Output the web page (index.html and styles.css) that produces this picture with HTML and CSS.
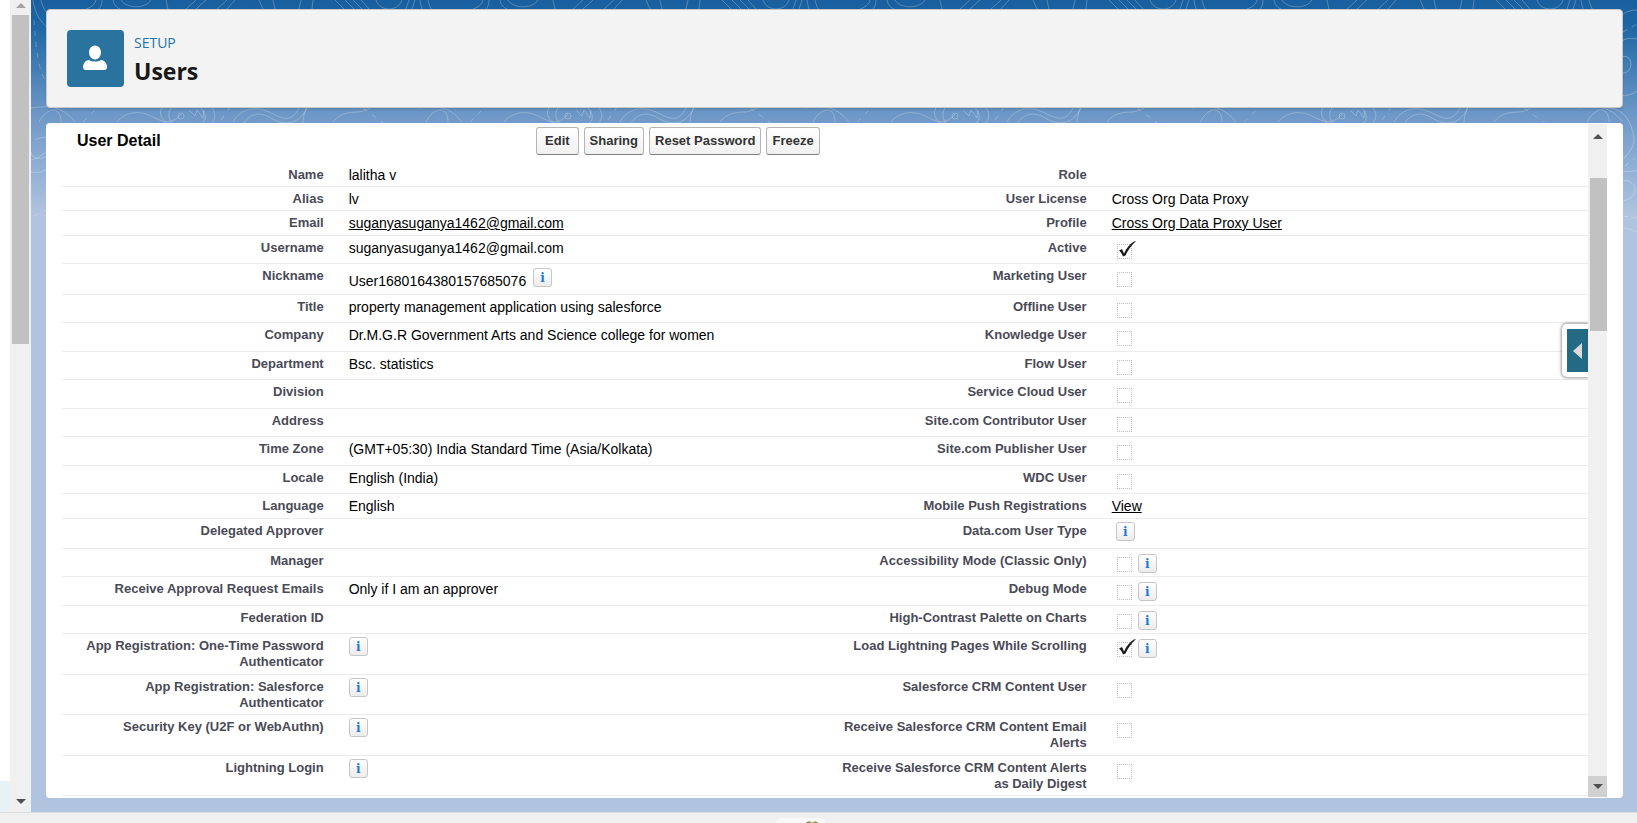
FILE: index.html
```html
<!DOCTYPE html>
<html lang="en">
<head>
<meta charset="utf-8">
<title>Users | Setup</title>
<link rel="stylesheet" href="styles.css">
</head>
<body>
<svg class="defs" aria-hidden="true">
  <symbol id="check" viewBox="0 0 20 20"><path d="M2 10.5 5 9l2 4.500C9.500 8 13 3.500 17 1.500l2-.5C14.500 5 11 10 8.500 15.500L6 16.500C5 14 4 12 2 10.500z" fill="#1c1c1c"/></symbol>
</svg>
<div class="app">
  <aside class="nav"><div class="nav-foot"></div></aside>
  <div class="scrollbar page-scroll" aria-hidden="true">
    <span class="arrow up faint"></span>
    <span class="thumb"></span>
    <span class="arrow down"></span>
  </div>
  <main class="stage">
    <svg class="topo" aria-hidden="true">
      <defs>
        <pattern id="contours" width="387" height="250" patternUnits="userSpaceOnUse" x="0" y="0">
          <g fill="none" stroke="#fff" stroke-opacity=".24" stroke-width="1">
            <path d="M2 0c2 14 8 24 20 32M10 0c2 10 8 18 18 22M55 9c6-2 9-5 10-9M68 9c2-2 3-5 3-9M82 0c1 5 4 8 7 9M90 0c4 8 24 10 30 0M135 0l2 9M155 9l10-9M165 9l10-9M186 9l10-9M196 9l8-9M228 0l4 9M242 0l2 9M270 0l-2 9M282 0l-1 9M304 0l9 9M314 0l9 9M322 0l9 9M330 0l8 9M345 0c4 12 22 12 26 0M378 0l-3 9M384 0l-3 9"/>
            <path d="M0 108c14-2 30-4 44 14M8 122c4-8 10-12 14-12 6 0 8 6 8 12M86 122c8-10 22-12 34-6s20 10 30-2M132 106c-6 8 0 14 4 18M140 108c-4 6-2 12 2 16M168 106c8 8 8 14 2 18M180 106c6 8 4 14 0 18M202 122c8-14 22-16 36-10 12 6 22 12 30-4M212 124c8-12 18-12 28-6s26 10 36-10M276 106c-2 6-4 10-4 18M302 122c6-8 14-10 26-10 8-2 12-4 16-8"/>
            <circle cx="150" cy="116" r="3"/><path d="M158 110l6 6 2-6 6 8 1-8"/>
            <path d="M4 140c10-6 20 0 16 10-4 12-20 10-20 2M0 160c8-2 14-6 20-14M0 172c10 2 16-2 22-8"/>
            <path stroke-dasharray="5 6" d="M3 20c2 30 4 60 20 70M52 122l14-14M190 120l10-14M332 108l22 16M3 216l16-8"/>
          </g>
        </pattern>
      </defs>
      <rect width="1592" height="245" fill="url(#contours)"/>
      <g class="edge" fill="none" stroke="#fff" stroke-opacity=".28" stroke-width="1">
        <path d="M1590 16c4-4 10-6 16-6M1590 42c4-4 8-4 16-3M1590 57c5-2 10 1 10 7s-5 10-10 9M1590 96c6 0 12-2 16-5M1576 108c16 0 24 12 27 30 1 8-6 16-13 24M1590 172c6-2 10 1 16-2M1590 181c7-2 13 2 14 8s-6 12-14 12M1590 228c6 0 12 2 16 4"/>
        <path stroke-dasharray="5 5" d="M1592 32l14-8M1594 166l10-8M1592 216l14 2"/>
      </g>
    </svg>
    <header class="page-header">
      <span class="avatar"><svg viewBox="0 0 57 57" aria-hidden="true"><ellipse cx="28" cy="22.500" rx="6" ry="7"/><path d="M22 30c3 2 9 2 12 0 4 0 6 4 6 7 0 2-1 3-3 3H19c-2 0-3-1-3-3 0-3 2-7 6-7z"/></svg></span>
      <div>
        <p class="eyebrow">SETUP</p>
        <h1>Users</h1>
      </div>
    </header>
    <section class="panel">
      <div class="detail">
        <div class="toolbar">
          <h2>User Detail</h2>
          <div class="actions">
            <button type="button" class="wide">Edit</button>
            <button type="button">Sharing</button>
            <button type="button">Reset Password</button>
            <button type="button">Freeze</button>
          </div>
        </div>
        <table>
          <colgroup><col class="c-label"><col class="c-value"><col class="c-label"><col class="c-value"></colgroup>
          <tbody>
          <tr class="s"><th>Name</th><td>lalitha v</td><th>Role</th><td></td></tr>
          <tr class="s"><th>Alias</th><td>lv</td><th>User License</th><td>Cross Org Data Proxy</td></tr>
          <tr class="m"><th>Email</th><td><a href="#">suganyasuganya1462@gmail.com</a></td><th>Profile</th><td><a href="#">Cross Org Data Proxy User</a></td></tr>
          <tr><th>Username</th><td>suganyasuganya1462@gmail.com</td><th>Active</th><td><span class="box"><svg><use href="#check"/></svg></span></td></tr>
          <tr class="xl"><th>Nickname</th><td class="with-info">User1680164380157685076 <button type="button" class="info" aria-label="Nickname info">i</button></td><th>Marketing User</th><td><span class="box"></span></td></tr>
          <tr><th>Title</th><td>property management application using salesforce</td><th>Offline User</th><td><span class="box"></span></td></tr>
          <tr class="l"><th>Company</th><td>Dr.M.G.R Government Arts and Science college for women</td><th>Knowledge User</th><td><span class="box"></span></td></tr>
          <tr><th>Department</th><td>Bsc. statistics</td><th>Flow User</th><td><span class="box"></span></td></tr>
          <tr class="l"><th>Division</th><td></td><th>Service Cloud User</th><td><span class="box"></span></td></tr>
          <tr><th>Address</th><td></td><th>Site.com Contributor User</th><td><span class="box"></span></td></tr>
          <tr class="l"><th>Time Zone</th><td>(GMT+05:30) India Standard Time (Asia/Kolkata)</td><th>Site.com Publisher User</th><td><span class="box"></span></td></tr>
          <tr><th>Locale</th><td>English (India)</td><th>WDC User</th><td><span class="box"></span></td></tr>
          <tr class="m"><th>Language</th><td>English</td><th>Mobile Push Registrations</th><td><a href="#">View</a></td></tr>
          <tr class="x"><th>Delegated Approver</th><td></td><th>Data.com User Type</th><td><button type="button" class="info indent" aria-label="Data.com User Type info">i</button></td></tr>
          <tr><th>Manager</th><td></td><th>Accessibility Mode (Classic Only)</th><td><span class="box"></span><button type="button" class="info" aria-label="Accessibility Mode info">i</button></td></tr>
          <tr class="l"><th>Receive Approval Request Emails</th><td>Only if I am an approver</td><th>Debug Mode</th><td><span class="box"></span><button type="button" class="info" aria-label="Debug Mode info">i</button></td></tr>
          <tr><th>Federation ID</th><td></td><th>High-Contrast Palette on Charts</th><td><span class="box"></span><button type="button" class="info" aria-label="High-Contrast info">i</button></td></tr>
          <tr class="d"><th>App Registration: One-Time Password Authenticator</th><td><button type="button" class="info" aria-label="One-Time Password info">i</button></td><th>Load Lightning Pages While Scrolling</th><td><span class="box"><svg><use href="#check"/></svg></span><button type="button" class="info" aria-label="Load Lightning Pages info">i</button></td></tr>
          <tr class="c"><th>App Registration: Salesforce Authenticator</th><td><button type="button" class="info" aria-label="Salesforce Authenticator info">i</button></td><th>Salesforce CRM Content User</th><td><span class="box"></span></td></tr>
          <tr class="d"><th>Security Key (U2F or WebAuthn)</th><td><button type="button" class="info" aria-label="Security Key info">i</button></td><th>Receive Salesforce CRM Content Email Alerts</th><td><span class="box"></span></td></tr>
          <tr class="c"><th>Lightning Login</th><td><button type="button" class="info" aria-label="Lightning Login info">i</button></td><th>Receive Salesforce CRM Content Alerts as Daily Digest</th><td><span class="box"></span></td></tr>
          </tbody>
        </table>
        <button type="button" class="drawer" aria-label="Open help panel"><span></span></button>
      </div>
      <div class="scrollbar panel-scroll" aria-hidden="true">
        <span class="arrow up"></span>
        <span class="thumb"></span>
        <span class="arrow down pressed"></span>
      </div>
    </section>
  </main>
</div>
<footer class="dock"><span class="dock-item"><svg viewBox="0 0 14 3" aria-hidden="true"><path d="M0 3C2 0 5 0 7 1 9 0 12 0 14 3z" fill="#8a8a4a"/><path d="M4 3l2-2h3l2 2z" fill="#c9b98f"/></svg></span></footer>
</body>
</html>
```
FILE: styles.css
```css
* { box-sizing: border-box; }
body {
  margin: 0;
  height: 100vh;
  display: flex;
  flex-direction: column;
  overflow: hidden;
  background: #fff;
  color: #000;
  font: 14px/16px "Liberation Sans", Arial, sans-serif;
}
.defs { position: absolute; width: 0; height: 0; }
.app { flex: 1; min-height: 0; display: flex; }

.nav { width: 10px; display: flex; flex-direction: column; justify-content: flex-end; }
.nav-foot { height: 31px; background: #e8f1f4; }

.scrollbar { display: flex; flex-direction: column; align-items: center; background: #f0f0f0; }
.scrollbar .thumb { width: 17px; background: #c1c1c1; }
.arrow { display: flex; justify-content: center; align-items: center; width: 100%; }
.arrow::after { content: ""; border: 5px solid transparent; border-top-width: 0; border-bottom: 5px solid #505050; }
.arrow.down::after { border-bottom-width: 0; border-top: 5px solid #505050; }
.arrow.faint::after { border-bottom-color: #a3a3a3; }
.arrow.down { margin-top: auto; height: 21px; }
.page-scroll { width: 21px; }
.page-scroll .up { height: 15px; padding-bottom: 4px; }
.page-scroll .thumb { height: 329px; }

.stage {
  position: relative;
  flex: 1;
  min-width: 0;
  padding: 9px 14px 14px 15px;
  display: flex;
  flex-direction: column;
  gap: 15px;
  background: linear-gradient(#195f9f 0, #1f66a3 25px, #7099c8 118px, #b0c4df 215px);
}
.topo { position: absolute; inset: 0; width: 100%; height: 245px; }

.page-header {
  position: relative;
  display: flex;
  align-items: flex-start;
  gap: 10px;
  height: 99px;
  padding: 20px;
  background: #f3f3f3;
  border: 1px solid #c9c9c9;
  border-radius: 4px;
  box-shadow: 0 2px 2px rgba(0, 0, 0, .1);
}
.avatar { width: 57px; height: 57px; border-radius: 4px; background: #2a739e; }
.avatar svg { display: block; fill: #fff; }
.eyebrow { margin: 3px 0 0; font: 14px/20px "Open Sans", sans-serif; color: #2574a9; }
h1 { margin: 1px 0 0; font: bold 23px/34px "Open Sans", sans-serif; color: #181818; }

.panel {
  position: relative;
  flex: 1;
  min-height: 0;
  display: flex;
  padding: 1px 16px 1px 16px;
  background: #fff;
  border-radius: 4px;
}
.detail { position: relative; flex: 1; min-width: 0; overflow: hidden; }
.panel-scroll { width: 19px; align-items: flex-end; }
.panel-scroll .up { height: 54px; padding-bottom: 30px; }
.panel-scroll .thumb { height: 153px; }
.panel-scroll .pressed { background: #d1d1d1; }

.toolbar { display: grid; grid-template-columns: 31% 1fr; height: 39px; padding-top: 3px; }
h2 { margin: 5px 0 0 15px; font: bold 16px/18px "Liberation Sans", Arial, sans-serif; }
.actions { display: flex; align-items: flex-start; gap: 5px; padding-left: 1px; }
.actions button {
  height: 28px;
  padding: 0 5px;
  border: 1px solid #b5b5b5;
  border-bottom-color: #7f7f7f;
  border-radius: 3px;
  background: linear-gradient(#fff, #f0f0f0);
  color: #333;
  font: bold 13px/16px "Liberation Sans", Arial, sans-serif;
}
.actions .wide { padding: 0 8px; }

table { width: 100%; table-layout: fixed; border-collapse: separate; border-spacing: 0; }
.c-label { width: 18%; }
.c-value { width: 32%; }
tr { height: 28px; }
.s { height: 24px; }
.m { height: 25px; }
.l { height: 29px; }
.x { height: 30px; }
.xl { height: 31px; }
.c { height: 40px; }
.d { height: 41px; }
th, td { vertical-align: top; border-bottom: 1px solid #ececec; }
th { padding: 4px 13px 0 8px; text-align: right; font-size: 13px; line-height: 16px; color: #4a4a56; }
td { padding: 4px 0 0 12px; line-height: 16px; white-space: nowrap; }
a { color: #000; }

.box {
  position: relative;
  display: inline-block;
  vertical-align: top;
  width: 15px;
  height: 15px;
  margin: 4px 6px 0 5px;
  border: 1px dotted #bbb;
}
.box svg { position: absolute; left: -1px; top: -5px; width: 20px; height: 20px; }
.info {
  width: 19px;
  height: 19px;
  margin: -1px 0 0;
  padding: 0;
  vertical-align: top;
  border: 1px solid #c6c6c6;
  border-radius: 3px;
  background: linear-gradient(#fff, #ececec);
  color: #2277d8;
  font: bold 12px/16px "DejaVu Serif", serif;
}
.box + .info { margin-top: 1px; }
.indent { margin-left: 4px; }
.with-info { padding-top: 9px; }
.with-info .info { margin: -5px 0 0 3px; }

.drawer {
  position: absolute;
  right: 0;
  top: 200px;
  width: 26px;
  height: 53px;
  padding: 5px 0 5px 5px;
  border: 0;
  border-radius: 5px 0 0 5px;
  background: #fff;
  box-shadow: 0 0 3px 1px rgba(0, 0, 0, .4);
}
.drawer span { display: flex; align-items: center; justify-content: center; height: 43px; background: #236a85; }
.drawer span::after { content: ""; border: 8px solid transparent; border-left-width: 0; border-right: 9px solid #dcdcdc; }

.dock { display: flex; justify-content: center; height: 11px; padding-top: 5px; background: #f0f0f0; border-top: 1px solid #dcdcdc; }
.dock-item { display: flex; justify-content: flex-end; width: 49px; height: 8px; margin-right: 36px; padding: 3px 6px 0 0; border-radius: 5px 5px 0 0; background: #f8f8f8; }
.dock-item svg { width: 14px; height: 3px; }
```
